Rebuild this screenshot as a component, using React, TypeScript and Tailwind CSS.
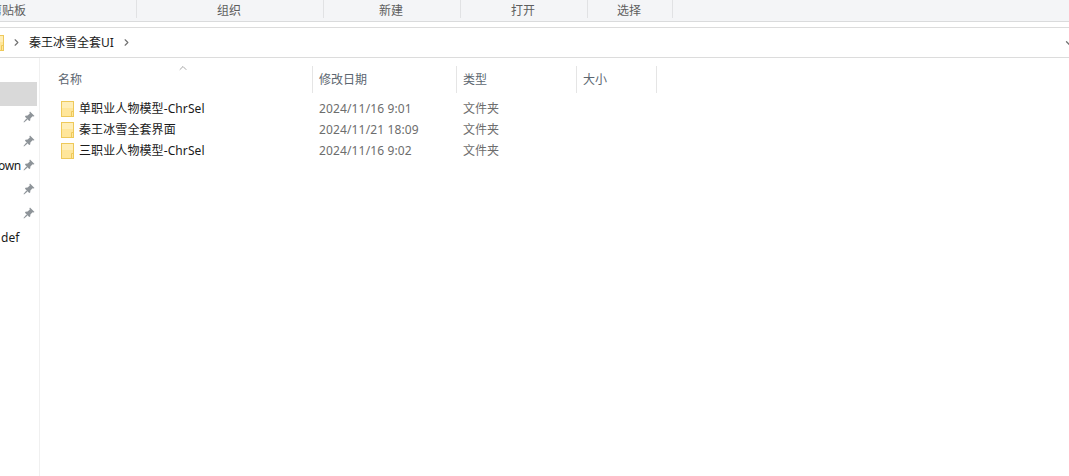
import { ChevronRight, ChevronUp, ChevronDown } from "lucide-react"

const font = { fontFamily: '"Noto Sans", "Noto Sans CJK SC", sans-serif' }

const ribbon = [
  { label: "剪贴板", w: "w-[137px]", text: "justify-end pr-[110px]" },
  { label: "组织", w: "w-[187px]", text: "justify-center pr-[2px]" },
  { label: "新建", w: "w-[137px]", text: "justify-center pr-[2px]" },
  { label: "打开", w: "w-[127px]", text: "justify-center pr-[2px]" },
  { label: "选择", w: "w-[85px]", text: "justify-center pr-[2px]" },
]

const files = [
  { name: "单职业人物模型-ChrSel", date: "2024/11/16 9:01" },
  { name: "秦王冰雪全套界面", date: "2024/11/21 18:09" },
  { name: "三职业人物模型-ChrSel", date: "2024/11/16 9:02" },
]

function FolderIcon({ className }: { className?: string }) {
  return (
    <svg className={className} width="14" height="16" viewBox="0 0 14 16">
      <rect x="0.5" y="0.5" width="12" height="15" fill="#ffe69a" stroke="#eec95a" />
      <rect x="1" y="1" width="11" height="6" fill="#ffeeb8" />
      <path d="M10.5 15.5V10.5H12.5" fill="none" stroke="#eec95a" />
    </svg>
  )
}

function PinIcon() {
  return (
    <svg className="mb-[2px]" width="12" height="12" viewBox="0 0 12 12" fill="#8e9499">
      <path d="M7 0.5L11.5 5L10.5 5.6L9.6 5.2L7.4 7.4L7.2 9.6L6.2 10L2 5.8L2.4 4.8L4.6 4.6L6.8 2.4L6.4 1.5Z" />
      <path d="M3.4 7.4L4.6 8.6L1 11.5L0.5 11Z" />
    </svg>
  )
}

export default function App() {
  return (
    <div className="flex h-[476px] w-[1069px] flex-col overflow-hidden bg-white text-[12px]" style={font}>
      {/* ribbon */}
      <div className="h-[22px] shrink-0 border-b border-[#dadbdc] bg-[#f4f5f7]">
        <div className="flex h-[18px] items-center text-[#5e5e5e]">
          {ribbon.map((r) => (
            <div key={r.label} className={`flex h-full items-center whitespace-nowrap border-r border-[#e1e2e4] pt-[3px] ${r.w} ${r.text}`}>
              {r.label}
            </div>
          ))}
        </div>
      </div>

      {/* address bar */}
      <div className="mt-[5px] flex h-[31px] shrink-0 items-center border-y border-[#dcdcdc] text-[#1a1a1a]">
        <FolderIcon className="ml-[-9px]" />
        <ChevronRight size={11} strokeWidth={2.5} className="ml-[6px] text-[#707070]" />
        <span className="ml-[7px]">秦王冰雪全套UI</span>
        <ChevronRight size={11} strokeWidth={2.5} className="ml-[7px] text-[#707070]" />
        <ChevronDown size={10} strokeWidth={3} className="ml-auto mr-[-5px] text-[#707070]" />
      </div>

      <div className="flex min-h-0 flex-1">
        {/* nav pane */}
        <div className="flex w-[40px] shrink-0 flex-col border-r border-[#f0f0f0] pt-[24px] text-[#1a1a1a]">
          <div className="h-[24px] w-[37px] bg-[#d9d9d9]" />
          {["", "", "own", "", ""].map((t, i) => (
            <div key={i} className="flex h-[24px] items-center">
              <span className="ml-[-2px] w-[25px] tracking-[-0.3px]">{t}</span>
              <PinIcon />
            </div>
          ))}
          <div className="flex h-[24px] items-center pl-[1px]">def</div>
        </div>

        {/* file list */}
        <div className="flex-1">
          <div className="relative mt-[8px] flex h-[27px] text-[#5c6670]">
            <ChevronUp size={12} strokeWidth={1.5} className="absolute left-[137px] top-[-4px] text-[#8a8a8a]" />
            <div className="flex w-[273px] items-center border-r border-[#e5e5e5] pl-[18px]">名称</div>
            <div className="flex w-[144px] items-center border-r border-[#e5e5e5] pl-[6px]">修改日期</div>
            <div className="flex w-[120px] items-center border-r border-[#e5e5e5] pl-[6px]">类型</div>
            <div className="flex w-[80px] items-center border-r border-[#e5e5e5] pl-[6px]">大小</div>
          </div>
          <div className="mt-[5px]">
            {files.map((f) => (
              <div key={f.name} className="flex h-[21px] items-center">
                <div className="flex w-[273px] items-center pl-[21px] text-[#1a1a1a]">
                  <FolderIcon />
                  <span className="ml-[4px] tracking-[0.1px]">{f.name}</span>
                </div>
                <div className="w-[144px] pl-[6px] tracking-[0.14px] text-[#6d6d6d]">{f.date}</div>
                <div className="pl-[6px] text-[#6d6d6d]">文件夹</div>
              </div>
            ))}
          </div>
        </div>
      </div>
    </div>
  )
}
